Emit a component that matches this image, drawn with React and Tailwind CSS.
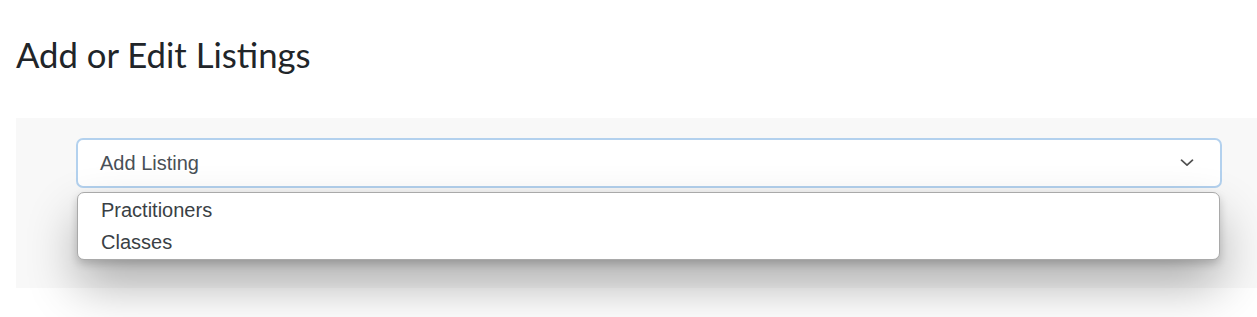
export default function App() {
  return (
    <div className="w-[1257px] h-[317px] bg-white overflow-hidden">
      <h2 className="pl-[16px] pt-[34px] text-[34.7px] leading-[1.2] text-[#212529] font-['Lato',sans-serif] font-normal">
        Add or Edit Listings
      </h2>
      <div className="ml-[16px] mt-[42px] bg-[#f8f8f8] pl-[60px] pr-[35px] pt-[20px] h-[170px] font-['Liberation_Sans',Arial,sans-serif]">
        <div className="relative">
          <div className="h-[50px] rounded-[7px] border-2 border-[#b3d1ee] bg-white flex items-center pl-[22px] pr-[26px]">
            <span className="flex-1 text-[20px] text-[#495057]">Add Listing</span>
            <svg width="14" height="8" viewBox="0 0 14 8" fill="none">
              <path d="M1.5 1.2l5.5 5L12.5 1.2" stroke="#505050" strokeWidth="1.7" strokeLinecap="round" strokeLinejoin="round" />
            </svg>
          </div>
          <div className="absolute left-[1px] right-[2px] top-[54px] rounded-[7px] border border-[#a9a9a9] bg-white py-[1px] shadow-[0_4px_8px_rgba(0,0,0,0.18),0_26px_50px_rgba(0,0,0,0.3)]">
            <div className="h-[32px] leading-[32px] pl-[23px] text-[20px] text-[#3a3f45]">Practitioners</div>
            <div className="h-[32px] leading-[32px] pl-[23px] text-[20px] text-[#3a3f45]">Classes</div>
          </div>
        </div>
      </div>
    </div>
  );
}
